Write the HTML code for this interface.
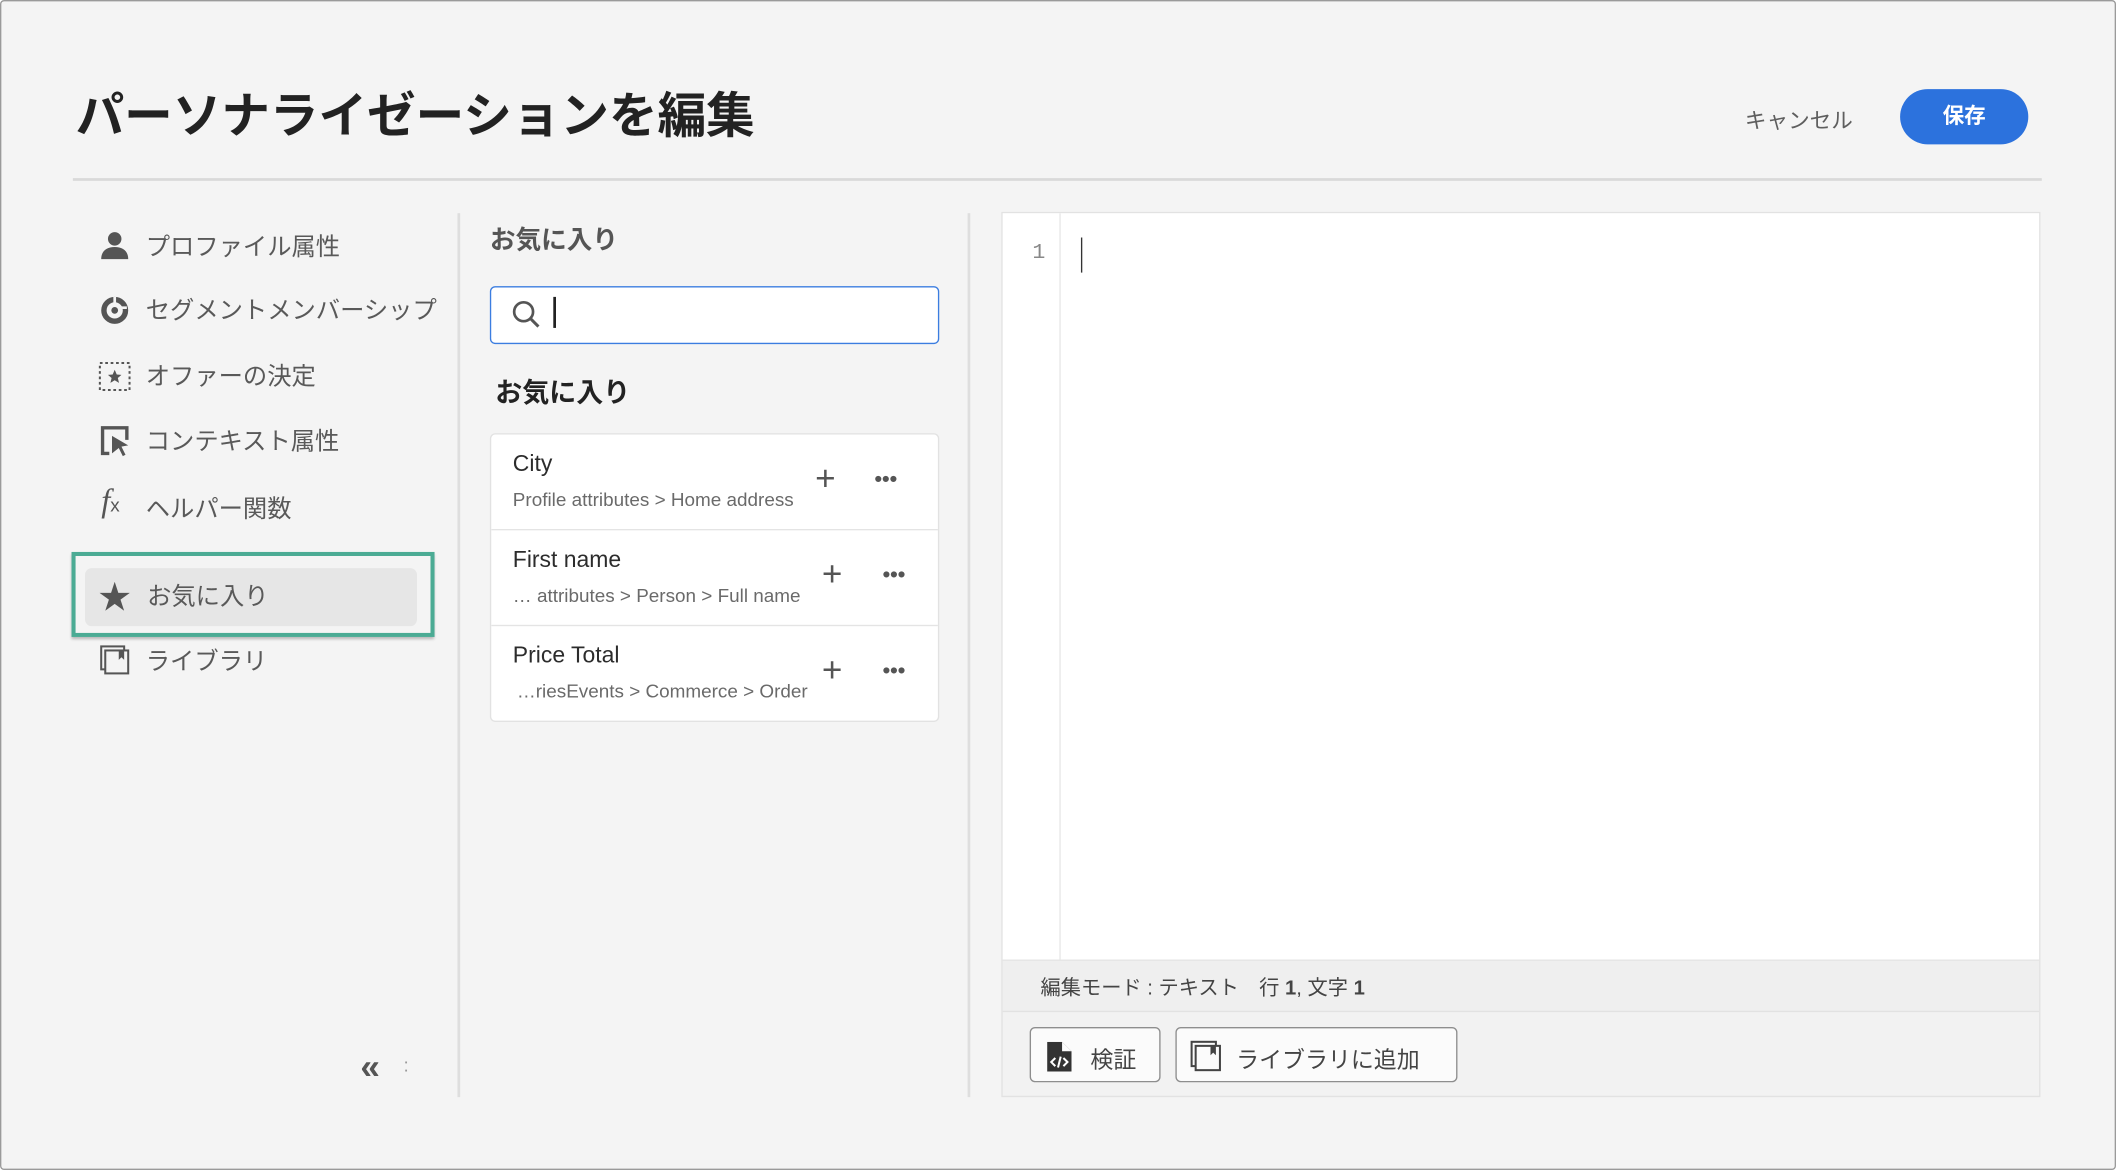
<!DOCTYPE html>
<html><head><meta charset="utf-8"><style>
*{box-sizing:border-box;margin:0;padding:0}
html,body{width:2116px;height:1170px;overflow:hidden;background:#fff}
#s{position:absolute;left:0;top:0;width:1568px;height:867px;transform:scale(1.3495);transform-origin:0 0;background:#f4f4f4;border:1px solid #9a9a9a;border-radius:3px;font-family:"Liberation Sans","Noto Sans CJK JP",sans-serif;color:#555}
.a{position:absolute;white-space:nowrap}
.nav{font-size:18px;color:#595959;line-height:24px}
.ic{position:absolute}
.row{position:absolute;left:0;width:332px;height:71px;border-bottom:1px solid #e4e4e4}
.t{position:absolute;left:16px;top:12px;font-size:17px;color:#2c2c2c}
.st{position:absolute;left:16px;top:40px;font-size:14px;color:#6a6a6a}
.pl{position:absolute;font-size:26px;color:#555;font-weight:300;top:17px}
.dt{position:absolute;top:25px;font-size:16px;color:#555;letter-spacing:0px;font-weight:bold}
.btn{position:absolute;top:760px;height:41px;border:1px solid #8e8e8e;border-radius:4px;background:#fbfbfb;font-size:17px;color:#444}
</style></head><body><div id="s">
<div class="a" style="left:55px;top:56px;font-size:36px;font-weight:bold;color:#222">パーソナライゼーションを編集</div>
<div class="a" style="left:1292px;top:75px;font-size:16px;color:#5e5e5e">キャンセル</div>
<div class="a" style="left:1407px;top:65px;width:95px;height:41px;border-radius:21px;background:#2c72dd;color:#fff;font-size:16px;font-weight:bold;text-align:center;line-height:41px">保存</div>
<div class="a" style="left:53px;top:131px;width:1459px;height:2px;background:#d9d9d9"></div>

<svg class="ic" style="left:73px;top:170px" width="22" height="22" viewBox="0 0 22 22"><circle cx="11" cy="6" r="5" fill="#555"/><path d="M1 21c0-6 4-9 10-9s10 3 10 9z" fill="#555"/></svg>
<div class="a nav" style="left:107px;top:170px">プロファイル属性</div>
<svg class="ic" style="left:73px;top:218px" width="22" height="22" viewBox="0 0 22 22"><circle cx="11" cy="11" r="8" fill="none" stroke="#555" stroke-width="4"/><circle cx="11" cy="11" r="2.5" fill="#555"/><path d="M11 1v5M20 9h-5" stroke="#f4f4f4" stroke-width="2"/></svg>
<div class="a nav" style="left:107px;top:217px">セグメントメンバーシップ</div>
<svg class="ic" style="left:72px;top:267px" width="24" height="22" viewBox="0 0 24 22"><rect x="1" y="1" width="22" height="20" fill="none" stroke="#555" stroke-width="1.5" stroke-dasharray="2 2"/><path d="M12 6l1.5 3.5 3.5.3-2.7 2.3.9 3.6L12 13.8 8.8 15.7l.9-3.6L7 9.8l3.5-.3z" fill="#555"/></svg>
<div class="a nav" style="left:107px;top:266px">オファーの決定</div>
<svg class="ic" style="left:73px;top:314px" width="24" height="24" viewBox="0 0 24 24"><path d="M7 21H2V2h18v9" fill="none" stroke="#555" stroke-width="2.5"/><path d="M9 8l12 7-5 1 3 6-2 1-3-6-5 4z" fill="#555"/></svg>
<div class="a nav" style="left:107px;top:314px">コンテキスト属性</div>
<div class="a" style="left:74px;top:358px;font-family:'Liberation Serif',serif;font-style:italic;font-size:24px;color:#555">f<span style="font-size:14px;font-style:normal;font-family:'Liberation Sans'">x</span></div>
<div class="a nav" style="left:107px;top:364px">ヘルパー関数</div>
<div class="a" style="left:52px;top:408px;width:269px;height:63px;border:3px solid #4bab94;box-shadow:0 2px 2px rgba(0,0,0,.25)"></div>
<div class="a" style="left:62px;top:420px;width:246px;height:43px;background:#e6e6e6;border-radius:5px"></div>
<div class="a" style="left:72px;top:422px;font-size:24px;color:#555">★</div>
<div class="a nav" style="left:108px;top:429px">お気に入り</div>
<svg class="ic" style="left:73px;top:477px" width="22" height="22" viewBox="0 0 22 22"><rect x="1" y="1" width="17" height="17" fill="none" stroke="#555" stroke-width="1.5"/><rect x="4" y="4" width="17" height="17" fill="#f4f4f4" stroke="#555" stroke-width="1.5"/><path d="M14 4v7l2-2 2 2V4z" fill="#555"/></svg>
<div class="a nav" style="left:107px;top:477px">ライブラリ</div>
<div class="a" style="left:266px;top:774px;font-size:26px;color:#555;font-weight:bold">«</div>
<div class="a" style="left:298px;top:780px;font-size:14px;color:#999">:</div>
<div class="a" style="left:338px;top:157px;width:2px;height:655px;background:#dedede"></div>

<div class="a" style="left:362px;top:162px;font-size:19px;color:#555;font-weight:bold">お気に入り</div>
<div class="a" style="left:362px;top:211px;width:333px;height:43px;border:1px solid #3b7de0;border-radius:4px;background:#fff"></div>
<svg class="ic" style="left:377px;top:220px" width="24" height="24" viewBox="0 0 24 24"><circle cx="10" cy="10" r="7" fill="none" stroke="#555" stroke-width="2"/><path d="M15 15l6 6" stroke="#555" stroke-width="2.2"/></svg>
<div class="a" style="left:409px;top:219px;width:2px;height:23px;background:#222"></div>
<div class="a" style="left:366px;top:274px;font-size:20px;color:#222;font-weight:bold">お気に入り</div>
<div class="a" style="left:362px;top:320px;width:333px;height:214px;background:#fff;border:1px solid #e2e2e2;border-radius:4px;overflow:hidden">
 <div class="row" style="top:0"><div class="t">City</div><div class="st">Profile attributes &gt; Home address</div><div class="pl" style="left:240px">+</div><div class="dt" style="left:284px">•••</div></div>
 <div class="row" style="top:71px"><div class="t">First name</div><div class="st">… attributes &gt; Person &gt; Full name</div><div class="pl" style="left:245px">+</div><div class="dt" style="left:290px">•••</div></div>
 <div class="row" style="top:142px;border:0"><div class="t">Price Total</div><div class="st" style="left:19px">…riesEvents &gt; Commerce &gt; Order</div><div class="pl" style="left:245px">+</div><div class="dt" style="left:290px">•••</div></div>
</div>
<div class="a" style="left:716px;top:157px;width:2px;height:655px;background:#dedede"></div>

<div class="a" style="left:741px;top:156px;width:770px;height:656px;border:1px solid #e2e2e2;background:#f2f2f2"></div>
<div class="a" style="left:742px;top:157px;width:768px;height:553px;background:#fff"></div>
<div class="a" style="left:784px;top:157px;width:1px;height:553px;background:#e8e8e8"></div>
<div class="a" style="left:764px;top:177px;font-family:'Liberation Mono',monospace;font-size:16px;color:#888">1</div>
<div class="a" style="left:800px;top:175px;width:1px;height:26px;background:#333"></div>
<div class="a" style="left:742px;top:710px;width:768px;height:39px;background:#efefef;border-top:1px solid #e4e4e4;border-bottom:1px solid #e2e2e2"></div>
<div class="a" style="left:770px;top:720px;font-size:15px;color:#444">編集モード : テキスト　行 <b>1</b>, 文字 <b>1</b></div>
<div class="btn" style="left:762px;width:97px"><svg class="ic" style="left:11px;top:10px" width="20" height="22" viewBox="0 0 20 22"><path d="M1 0h11l7 7v15H1z" fill="#333"/><path d="M12 0v7h7" fill="#fbfbfb"/><path d="M7 12l-3 3 3 3M13 12l3 3-3 3M11 11l-2 8" stroke="#fff" stroke-width="1.5" fill="none"/></svg><span class="a" style="left:44px;top:9px">検証</span></div>
<div class="btn" style="left:870px;width:209px"><svg class="ic" style="left:10px;top:9px" width="24" height="24" viewBox="0 0 24 24"><rect x="1" y="1" width="18" height="18" fill="none" stroke="#444" stroke-width="1.5"/><rect x="4" y="4" width="18" height="18" fill="#fbfbfb" stroke="#444" stroke-width="1.5"/><path d="M15 4v7l2-2 2 2V4z" fill="#444"/></svg><span class="a" style="left:44px;top:9px">ライブラリに追加</span></div>
</div></body></html>
